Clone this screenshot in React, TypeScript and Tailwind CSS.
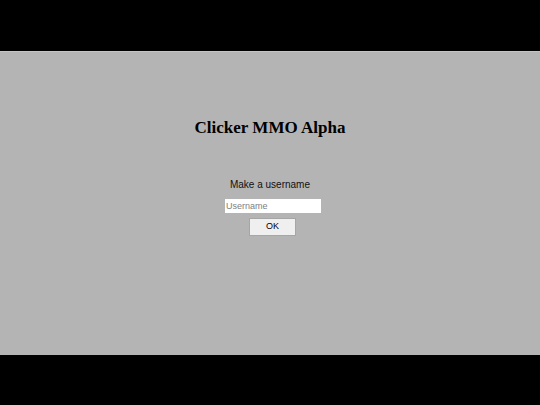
export default function App() {
  return (
    <div className="w-[540px] h-[405px] bg-black flex flex-col justify-center">
      <div className="h-[304px] bg-[#b4b4b4] border-t border-[#c4c4c4] flex flex-col items-center">
        <h1 className="mt-[65px] text-[17px] leading-[21px] font-bold text-black [font-family:'Liberation_Serif',serif]">
          Clicker MMO Alpha
        </h1>
        <p className="mt-[41px] text-[10px] leading-[12px] text-[#111] [font-family:'Liberation_Sans',sans-serif]">
          Make a username
        </p>
        <input
          placeholder="Username"
          className="mt-[8px] ml-[6px] w-[96px] h-[14px] bg-white px-[1px] text-[9px] text-black placeholder:text-[#808080] outline-none [font-family:'Liberation_Sans',sans-serif]"
        />
        <button className="mt-[5px] ml-[5px] w-[47px] h-[18px] bg-[#efefef] border border-[#a6a6a6] text-[9px] text-black [font-family:'Liberation_Sans',sans-serif]">
          OK
        </button>
      </div>
    </div>
  )
}
